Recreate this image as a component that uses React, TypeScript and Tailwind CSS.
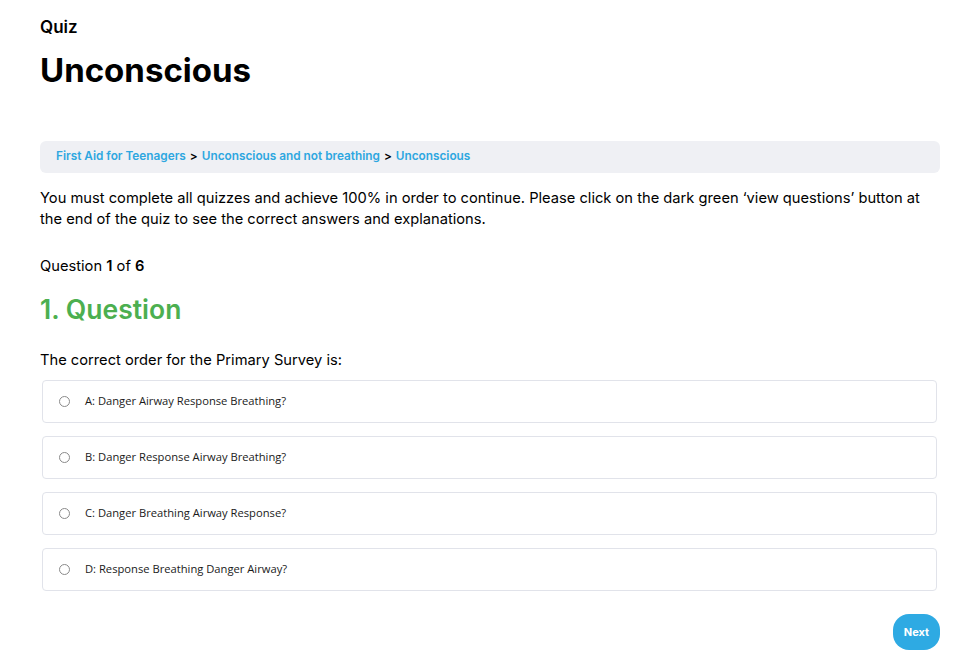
const options = [
  'A: Danger Airway Response Breathing?',
  'B: Danger Response Airway Breathing?',
  'C: Danger Breathing Airway Response?',
  'D: Response Breathing Danger Airway?',
]

export default function App() {
  return (
    <div className="min-h-screen bg-white text-black font-['Inter',sans-serif]">
      <div className="pl-10 pr-[38px] pt-[17px]">
        <div className="text-[17px] font-semibold leading-[20px]">Quiz</div>
        <h1 className="mt-[13px] text-[33px] font-bold leading-[40px]">Unconscious</h1>

        <div className="mt-[51px] flex h-[32px] items-center rounded-md bg-[#eff0f4] px-4 text-[11.8px] font-semibold">
          <a className="text-[#2ea7e0]">First Aid for Teenagers</a>
          <span className="mx-1">&gt;</span>
          <a className="text-[#2ea7e0]">Unconscious and not breathing</a>
          <span className="mx-1">&gt;</span>
          <a className="text-[#2ea7e0]">Unconscious</a>
        </div>

        <p className="mt-[15px] text-[14.7px] leading-[21px]">
          You must complete all quizzes and achieve 100% in order to continue. Please click on the dark green ‘view questions’ button at the end of the quiz to see the correct answers and explanations.
        </p>

        <div className="mt-[26px] text-[14.7px] leading-[21px]">
          Question <span className="font-semibold">1</span> of <span className="font-semibold">6</span>
        </div>

        <h2 className="mt-[16px] text-[26.5px] font-semibold leading-[32px] text-[#4caf50]">1. Question</h2>

        <p className="mt-[25px] text-[14.7px] leading-[21px]">The correct order for the Primary Survey is:</p>

        <div className="mt-[9px] flex flex-col gap-[13px] pl-[2px] pr-[3px]">
          {options.map((o) => (
            <label
              key={o}
              className="flex h-[43px] items-center rounded-[4px] border border-[#e1e3ea] bg-white pl-[16px] font-['Open_Sans',sans-serif] text-[11.2px] text-[#1a1a1a]"
            >
              <span className="h-[11px] w-[11px] rounded-full border border-[#8a8a8a] bg-white" />
              <span className="ml-[15px]">{o}</span>
            </label>
          ))}
        </div>

        <div className="mt-[23px] flex justify-end">
          <button className="h-[36px] w-[47px] rounded-[16px] bg-[#2eaae3] text-[11px] font-bold text-white">
            Next
          </button>
        </div>
      </div>
    </div>
  )
}
